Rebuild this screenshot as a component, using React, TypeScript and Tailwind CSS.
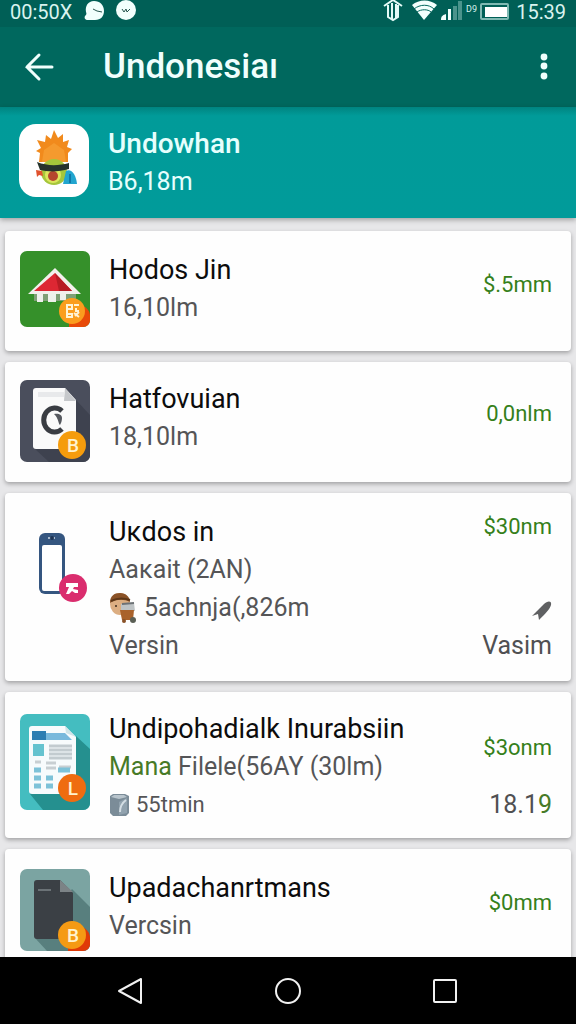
import type { ReactNode } from 'react'
import clsx from 'clsx'

type AppItem = {
  title: string
  lines: ReactNode[]
  icon: ReactNode
  price: string
  pricePadding: string
  padding: string
  extra?: ReactNode
}

function Badge({
  y,
  color,
  label,
}: {
  y: number
  color: string
  label: string
}) {
  return (
    <>
      <circle cx="52" cy={y} r="14" fill={color} />
      <text
        x="53"
        y={y + 7}
        textAnchor="middle"
        fontSize="19"
        fontWeight="500"
        fill="#fff3cf"
      >
        {label}
      </text>
    </>
  )
}

function SunIcon() {
  return (
    <svg viewBox="0 0 70 74" className="h-[74px] w-[70px] shrink-0">
      <rect width="70" height="73" rx="17" fill="#fff" />
      <path
        d="M20 38l1-9-4-2 5-3-4-8 8 2 1-7 5 4 3-9 4 8 5-4 0 8 6-2-2 7 5 2-4 4v9z"
        fill="#f18a1c"
      />
      <path d="M23 38l2-12 10-7 10 7 2 12z" fill="#f59a2e" />
      <circle cx="35" cy="48" r="13" fill="#a5c63b" />
      <circle cx="34" cy="51" r="8" fill="#dce65c" />
      <circle cx="34" cy="52" r="5" fill="#b5462e" />
      <path d="M18 38c10 4 21 4 32 1v6c-10 3-21 3-29 1z" fill="#26332c" />
      <path d="M17 46l6 1 1 5-4-1-2 2z" fill="#e0512d" />
      <path d="M47 47c5-3 10 3 11 13H44z" fill="#22a5cf" />
      <path d="M51 50v9" stroke="#0f79a8" strokeWidth="2" />
    </svg>
  )
}

function HouseIcon() {
  return (
    <svg viewBox="0 0 70 76" className="h-[76px] w-[70px]">
      <rect width="70" height="76" rx="7" fill="#35902a" />
      <path d="M14 42h42v8H14z" fill="#7f9f76" />
      <path d="M17 42h6v9h-6zM28 42h8v9h-8zM40 42h6v7h-6z" fill="#eef1ec" />
      <path d="M35 17L61 43H8z" fill="#f2f0ec" />
      <path d="M35 22l17 18H14z" fill="#dd2733" />
      <path d="M35 22l17 18H39z" fill="#b71c24" />
      <path d="M62 54c5 3 8 6 8 11v4c0 4-3 7-7 7H49V62z" fill="#e84a08" />
      <circle cx="52" cy="60" r="13" fill="#fb9d1e" />
      <path
        d="M47 54h5v4h-5zM47 59v7h5v-3h-4m6-9h5m-3 3v3h3m-5 2l5 4m0-5l-4 4"
        fill="none"
        stroke="#fff3d6"
        strokeWidth="2"
      />
    </svg>
  )
}

function DocumentIcon() {
  return (
    <svg viewBox="0 0 70 82" className="h-[82px] w-[70px]">
      <rect width="70" height="82" rx="7" fill="#4a4e5c" />
      <path d="M56 20l14 15v40c0 4-3 7-7 7H29L15 69z" fill="#3e424f" />
      <path
        d="M16 8h29l11 12v46c0 2-1 3-3 3H16c-2 0-3-1-3-3V11c0-2 1-3 3-3z"
        fill="#fafafa"
      />
      <path d="M18 12h26v5H18z" fill="#e8e9eb" />
      <path d="M45 8l11 13H44z" fill="#c6c8cb" />
      <path
        d="M42 31a11 12 0 1 0 0 18"
        fill="none"
        stroke="#393c42"
        strokeWidth="5"
      />
      <path d="M34 34c5-1 8 1 8 4s-1 5-2 7c-2-2-1-6-6-11z" fill="#55585e" />
      <Badge y={65} color="#f59c0d" label="B" />
    </svg>
  )
}

function PhoneIcon() {
  return (
    <svg viewBox="0 0 70 96" className="h-[96px] w-[70px]">
      <rect x="19" y="20" width="26" height="61" rx="6" fill="#355680" />
      <rect x="22" y="32" width="20" height="46" rx="2" fill="#fff" />
      <path d="M28 25h7" stroke="#a9b9cc" strokeWidth="2" />
      <circle cx="32" cy="25" r="2" fill="#1e3554" />
      <circle cx="53" cy="75" r="14" fill="#da2d6e" />
      <path
        d="M46 70h12v4h-4l-1 2 5 1v3h-3l-3-2-3 3h-3l3-7h-3z"
        fill="#fff"
      />
    </svg>
  )
}

function NewspaperIcon() {
  return (
    <svg viewBox="0 0 70 96" className="mt-1 h-[96px] w-[70px]">
      <rect width="70" height="96" rx="7" fill="#44bdc0" />
      <path d="M56 22l14 13v54c0 4-3 7-7 7H23L10 80z" fill="#25908f" />
      <path
        d="M12 12h33l11 11v54c0 2-1 3-3 3H12c-2 0-3-1-3-3V15c0-2 1-3 3-3z"
        fill="#f7fbfc"
      />
      <path d="M12 17h14v9H12z" fill="#2d7eb2" />
      <path d="M26 19h19l7 7H26z" fill="#79b9dc" />
      <path d="M45 12l11 11-10-4z" fill="#cfe4e8" />
      <path d="M13 30h11v12H13z" fill="#65c3cf" />
      <path
        d="M29 32h23M29 36h23M29 40h23M29 44h23"
        stroke="#c2cbcf"
        strokeWidth="3"
      />
      <path
        d="M15 48h6M26 49h10M39 53h12M26 54h10"
        stroke="#c8cfd2"
        strokeWidth="3"
      />
      <path
        d="M14 56h7M14 64h7M14 72h7M26 64h7M26 72h7M38 56h12"
        stroke="#7dc2d8"
        strokeWidth="5"
      />
      <Badge y={74} color="#ef6c10" label="L" />
    </svg>
  )
}

function DarkFileIcon() {
  return (
    <svg viewBox="0 0 70 82" className="h-[82px] w-[70px]">
      <rect width="70" height="82" rx="7" fill="#7ba4a2" />
      <path d="M52 20l18 18v37c0 4-3 7-7 7H27L15 69z" fill="#587f7e" />
      <path
        d="M17 11h23l13 13v43c0 2-1 3-3 3H17c-2 0-3-1-3-3V14c0-2 1-3 3-3z"
        fill="#3b4045"
      />
      <path d="M40 11l13 12H40z" fill="#7c8386" />
      <path d="M18 21h13" stroke="#6b7276" strokeWidth="2" />
      <path d="M62 58c5 2 8 6 8 11v6c0 4-3 7-7 7H48V70z" fill="#e03a08" />
      <Badge y={66} color="#f59a14" label="B" />
    </svg>
  )
}

function PersonIcon() {
  return (
    <svg viewBox="0 0 28 32" className="h-8 w-7 shrink-0">
      <ellipse cx="11" cy="12" rx="10" ry="11" fill="#dcae82" />
      <path d="M1 11C1 4 5 1 11 1s10 4 10 9c-6-3-14-3-20 1z" fill="#8a5227" />
      <path d="M2 9c6-3 13-3 19-1" stroke="#5d3718" strokeWidth="2" fill="none" />
      <circle cx="7" cy="14" r="1" fill="#3c2a1b" />
      <path d="M12 12l13-1 1 8H12z" fill="#bfc4c6" />
      <path d="M11 18h14l-1 10H13z" fill="#a9622b" />
      <path d="M13 12l12-1" stroke="#6d7276" strokeWidth="2" />
      <circle cx="24" cy="28" r="3" fill="#5b5f55" />
      <circle cx="15" cy="29" r="2" fill="#8a5227" />
    </svg>
  )
}

function BinIcon() {
  return (
    <svg viewBox="0 0 20 22" className="h-[22px] w-5 shrink-0">
      <path d="M1 2l3-2h12l4 2v17l-3 3H4l-3-3z" fill="#7b8c98" />
      <path d="M2 3l8 2 8-2-3-2H5z" fill="#b8c4cc" />
      <path d="M10 8l8-4v15l-8 2z" fill="#91a2ae" />
      <path d="M11 18c0-6 2-9 6-12" stroke="#d4dee4" strokeWidth="2" fill="none" />
    </svg>
  )
}

function ArrowMark() {
  return (
    <svg viewBox="0 0 20 20" className="h-5 w-5">
      <path d="M0 15L12 3c3-3 8-4 7 1-1 4-6 9-12 15l-1-6z" fill="#5f6062" />
    </svg>
  )
}

const items: AppItem[] = [
  {
    title: 'Hodos Jin',
    lines: ['16,10lm'],
    icon: <HouseIcon />,
    price: '$.5mm',
    pricePadding: 'pt-5',
    padding: 'pt-5 pb-6',
  },
  {
    title: 'Hatfovuian',
    lines: ['18,10lm'],
    icon: <DocumentIcon />,
    price: '0,0nlm',
    pricePadding: 'pt-5',
    padding: 'pt-[18px] pb-5',
  },
  {
    title: 'Uĸdos in',
    lines: [
      'Aaĸait (2AN)',
      <>
        <PersonIcon />
        5achnja(,826m
      </>,
      'Versin',
    ],
    icon: <PhoneIcon />,
    price: '$30nm',
    pricePadding: 'pt-0',
    padding: 'pt-5 pb-4',
    extra: (
      <>
        <ArrowMark />
        <span className="mt-1.5 text-[25px] leading-[38px] text-[#505052]">
          Vasim
        </span>
      </>
    ),
  },
  {
    title: 'Undipohadialk Inurabsiin',
    lines: [
      <span>
        <span className="text-[#477a27]">Mana</span> Filele(56AY (30lm)
      </span>,
      <>
        <BinIcon />
        <span className="text-[22px] leading-[38px]">55tmin</span>
      </>,
    ],
    icon: <NewspaperIcon />,
    price: '$3onm',
    pricePadding: 'pt-6',
    padding: 'pt-[18px] pb-[14px]',
    extra: (
      <span className="text-[25px] leading-[38px] text-[#505052]">
        18.1<span className="text-[#477a27]">9</span>
      </span>
    ),
  },
  {
    title: 'Upadachanrtmans',
    lines: ['Vercsin'],
    icon: <DarkFileIcon />,
    price: '$0mm',
    pricePadding: 'pt-5',
    padding: 'pt-5 pb-5',
  },
]

function AppCard({ item }: { item: AppItem }) {
  return (
    <li
      className={clsx(
        'flex shrink-0 items-start rounded bg-[#fefefe] pl-[15px] pr-[19px] shadow-[0_2px_4px_rgba(0,0,0,0.3)]',
        item.padding,
      )}
    >
      <div className="shrink-0">{item.icon}</div>
      <div className="ml-[19px] min-w-0 flex-1 whitespace-nowrap">
        <h2 className="text-[27px] leading-[38px] text-[#0c0c0c]">
          {item.title}
        </h2>
        {item.lines.map((line, index) => (
          <div
            key={index}
            className="flex items-center gap-[7px] text-[25px] leading-[38px] text-[#555557]"
          >
            {line}
          </div>
        ))}
      </div>
      <div
        className={clsx(
          'flex flex-col items-end justify-end self-stretch',
          item.pricePadding,
        )}
      >
        <span className="mb-auto text-[22px] leading-7 text-[#35801a]">
          {item.price}
        </span>
        {item.extra}
      </div>
    </li>
  )
}

function StatusBar() {
  return (
    <div className="flex h-[27px] shrink-0 items-start justify-between bg-[#005f56] px-[10px] text-[20px] leading-6 text-[#d9f3ef]">
      <div className="flex items-start">
        <span>00:50X</span>
        <svg viewBox="0 0 52 22" className="ml-3 h-[22px] w-[52px]">
          <path
            d="M10 1c6 0 10 4 10 10 0 5-3 9-9 9H4c-3 0-4-2-3-4 1-1 2-2 1-4C1 6 4 1 10 1z"
            fill="#f2fffd"
          />
          <path d="M9 9l4 2 5 1" stroke="#26544e" strokeWidth="1" fill="none" />
          <circle cx="42" cy="10" r="10" fill="#f2fffd" />
          <path
            d="M38 9l2 3 2-3 1 3 3-3"
            stroke="#26544e"
            strokeWidth="1"
            fill="none"
          />
        </svg>
      </div>
      <div className="flex items-start">
        <svg viewBox="0 0 126 22" className="mr-[7px] h-[22px] w-[126px]">
          <path
            d="M1 6l9-6 9 6M5 5v12l5 3 5-3V5M9 3v16M13 4v14"
            fill="none"
            stroke="#e4fbf7"
            strokeWidth="2"
          />
          <path d="M29 5c7-6 18-6 25 0L41 20z" fill="#f2fffd" />
          <path
            d="M31 9c6-5 15-5 20 0M34 12c4-3 11-3 14 0"
            fill="none"
            stroke="#00665c"
            strokeWidth="1"
          />
          <path d="M58 20c0-4 2-5 5-6v6zM65 9h3v11h-3z" fill="#f2fffd" />
          <path d="M70 6h4v14h-4zM75 1h4v19h-4z" fill="#4b948c" />
          <text x="83" y="12" fontSize="9" fill="#d9f3ef">
            D9
          </text>
          <rect
            x="98"
            y="4"
            width="27"
            height="15"
            rx="1"
            fill="none"
            stroke="#7fb9b2"
            strokeWidth="2"
          />
          <path d="M102 7h22v10h-22z" fill="#fff" />
        </svg>
        <span>15:39</span>
      </div>
    </div>
  )
}

export default function App() {
  return (
    <div className="flex h-screen flex-col overflow-hidden bg-[#e7e7e9] font-['Roboto',sans-serif]">
      <StatusBar />
      <header className="flex h-20 shrink-0 items-center bg-[#00685e] pr-3 text-[#f0fffd]">
        <button type="button" aria-label="Back" className="ml-6">
          <svg viewBox="0 0 30 30" className="h-[30px] w-[30px]">
            <path
              d="M15 3L3 15l12 12M3 15h25"
              fill="none"
              stroke="currentColor"
              strokeWidth="3"
              strokeLinecap="round"
            />
          </svg>
        </button>
        <h1 className="ml-[49px] flex-1 text-[35px] font-medium">Undonesiaı</h1>
        <button type="button" aria-label="More options">
          <svg viewBox="0 0 40 30" className="h-[30px] w-10" fill="currentColor">
            <circle cx="20" cy="5" r="3.4" />
            <circle cx="20" cy="14" r="3.4" />
            <circle cx="20" cy="24" r="3.4" />
          </svg>
        </button>
      </header>
      <section className="z-10 flex h-[111px] shrink-0 items-center bg-gradient-to-b from-[#008480] via-[#019b99] via-8% to-[#019b9a] pb-1 pl-[19px] shadow-[0_2px_5px_rgba(0,0,0,0.3)]">
        <SunIcon />
        <div className="ml-[19px] pt-[5px] text-[#e6fffd]">
          <p className="text-[28px] leading-[38px] font-medium">Undowhan</p>
          <p className="text-[25px] leading-[38px]">B6,18m</p>
        </div>
      </section>
      <main className="min-h-0 flex-1 overflow-hidden px-[5px] pt-[13px]">
        <ul className="flex flex-col gap-[11px]">
          {items.map((item) => (
            <AppCard key={item.title} item={item} />
          ))}
        </ul>
      </main>
      <nav className="z-10 flex h-[67px] shrink-0 items-center justify-center gap-[117px] bg-black text-[#f1f1f1]">
        <button type="button" aria-label="Previous screen">
          <svg viewBox="0 0 40 30" className="h-[30px] w-10">
            <path
              d="M30 3v24L8 15z"
              fill="none"
              stroke="currentColor"
              strokeWidth="2"
              strokeLinejoin="round"
            />
          </svg>
        </button>
        <button type="button" aria-label="Home">
          <svg viewBox="0 0 40 30" className="h-[30px] w-10">
            <circle
              cx="20"
              cy="15"
              r="12"
              fill="none"
              stroke="currentColor"
              strokeWidth="2"
            />
          </svg>
        </button>
        <button type="button" aria-label="Recent apps">
          <svg viewBox="0 0 40 30" className="h-[30px] w-10">
            <rect
              x="9"
              y="4"
              width="22"
              height="22"
              rx="1"
              fill="none"
              stroke="currentColor"
              strokeWidth="2"
            />
          </svg>
        </button>
      </nav>
    </div>
  )
}
